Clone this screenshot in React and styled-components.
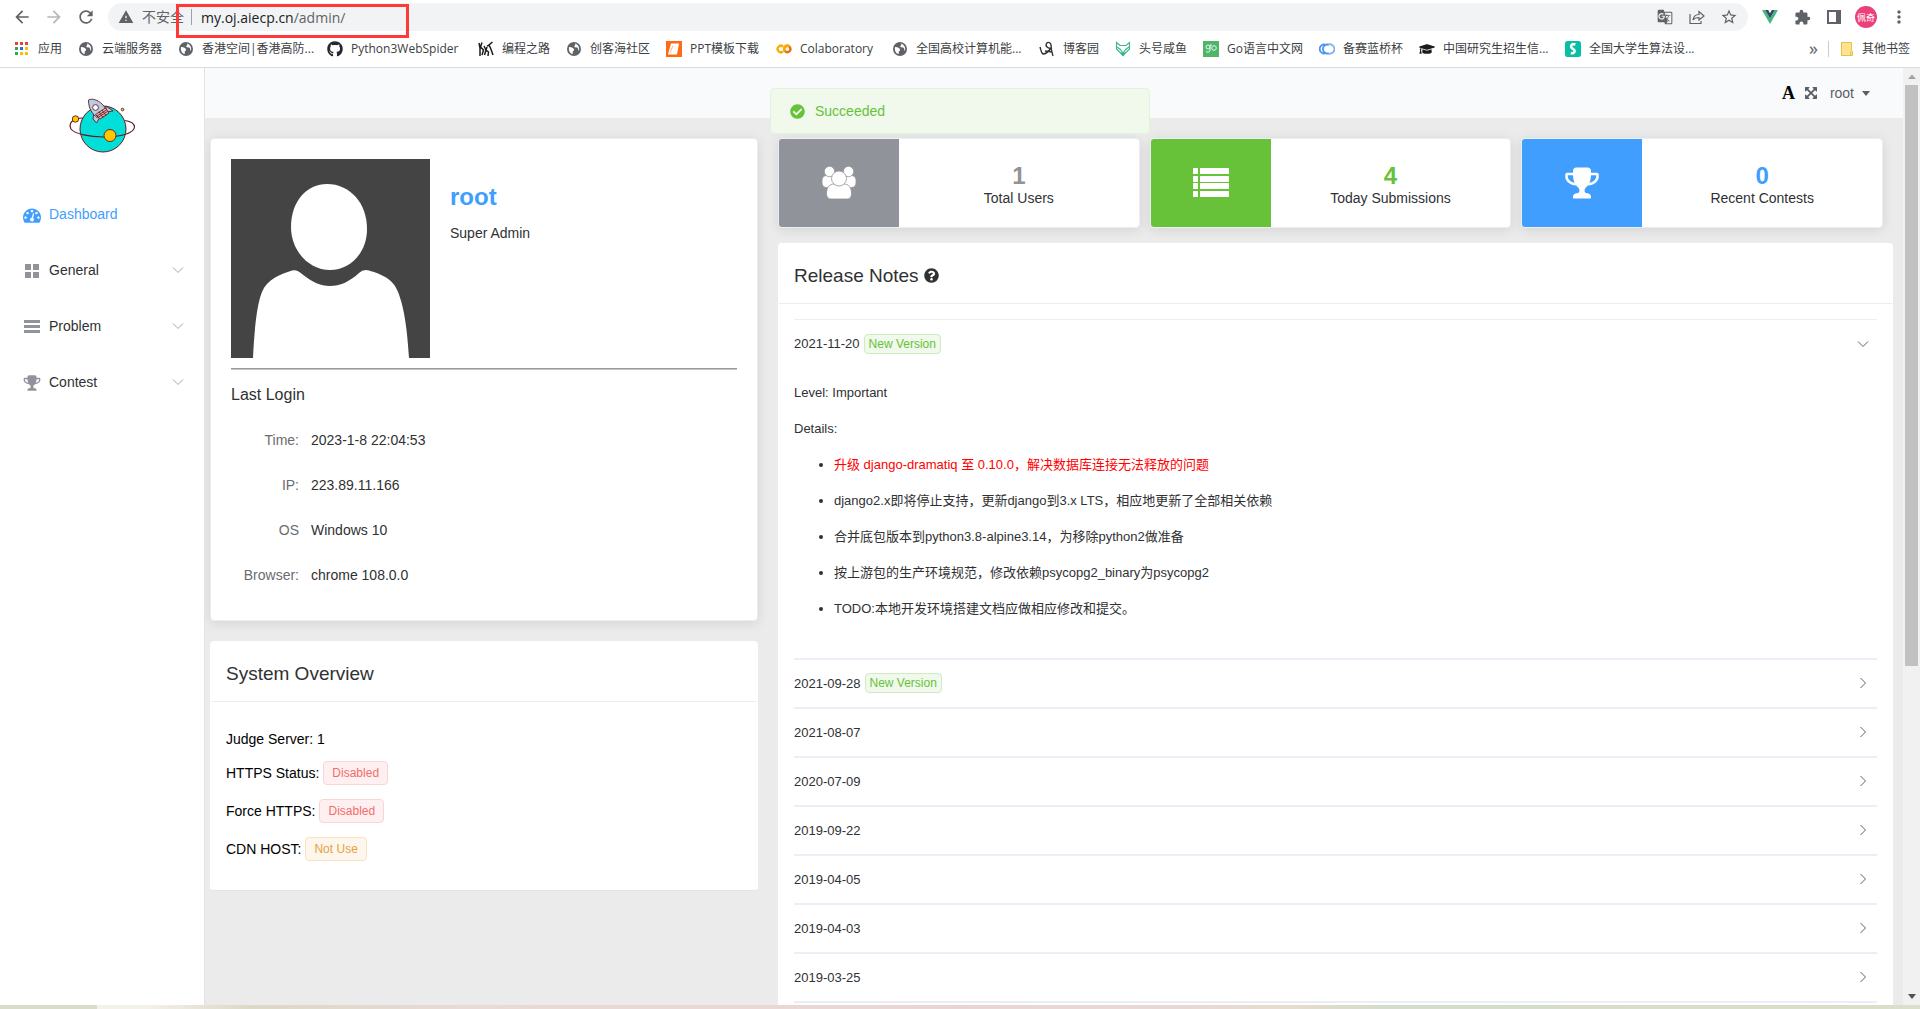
import React from "react";
import styled, { createGlobalStyle } from "styled-components";
import { FaGithub, FaCheckCircle, FaQuestionCircle, FaGraduationCap } from "react-icons/fa";
import { MdArrowBack, MdArrowForward, MdRefresh, MdWarning, MdExtension, MdMoreVert, MdStarBorder, MdGTranslate } from "react-icons/md";

const ui = `"Liberation Sans", Arial, "Noto Sans CJK SC", sans-serif`;
const chrome = `"Open Sans", "Noto Sans CJK SC", sans-serif`;

const GlobalStyle = createGlobalStyle`
  * { box-sizing: border-box; }
  html, body { margin: 0; padding: 0; }
  body { font-family: ${ui}; font-size: 14px; color: #303133; overflow: hidden; }
  button { font: inherit; color: inherit; border: 0; background: none; padding: 0; cursor: pointer; }
  a { color: inherit; text-decoration: none; }
  h1, h2, h3, p, ul, dl, dd { margin: 0; padding: 0; font-weight: normal; }
  svg { display: block; flex: none; }
`;

/* ---------- browser frame ---------- */

const Screen = styled.div`
  display: flex;
  flex-direction: column;
  height: 100vh;
  background: #fff;
`;

const Toolbar = styled.div`
  position: relative;
  display: flex;
  align-items: center;
  gap: 14px;
  height: 34px;
  padding: 0 13px 0 12px;
  color: #5f6368;
  font-family: ${chrome};
`;

const ToolButton = styled.button`
  display: grid;
  place-items: center;
  width: 18px;
  height: 28px;
  opacity: ${(p) => (p.$dim ? 0.45 : 1)};
`;

const Omnibox = styled.div`
  flex: 1;
  display: flex;
  align-items: center;
  height: 28px;
  padding: 0 10px;
  margin-right: -1px;
  border-radius: 14px;
  background: #f1f3f4;
  font-size: 14px;
`;

const Insecure = styled.button`
  display: flex;
  align-items: center;
  gap: 8px;
  padding-right: 7px;
  line-height: 16px;
  border-right: 1px solid #9aa0a6;
`;

const Address = styled.div`
  flex: 1;
  padding-left: 9px;
  white-space: nowrap;
  b { font-weight: 400; color: #202124; }
`;

const OmniActions = styled.div`
  display: flex;
  gap: 14px;
`;

const ToolActions = styled.div`
  display: flex;
  align-items: center;
  gap: 14px;
`;

const Profile = styled.button`
  display: grid;
  place-items: center;
  width: 22px;
  height: 22px;
  margin: 0 -2px;
  border-radius: 50%;
  background: #ec407a;
  color: #fff;
  font-size: 9px;
  white-space: nowrap;
`;

const Highlight = styled.div`
  position: absolute;
  left: 176px;
  top: 4px;
  width: 233px;
  height: 34px;
  border: 3px solid #ff3838;
  z-index: 2;
  pointer-events: none;
`;

const Bookmarks = styled.nav`
  display: flex;
  align-items: center;
  gap: 16px;
  height: 34px;
  padding: 0 10px 3px 14px;
  border-bottom: 1px solid #dadce0;
  font-family: ${chrome};
  font-size: 12px;
  line-height: 18px;
  color: #3c4043;
  white-space: nowrap;
`;

const Bookmark = styled.a`
  display: flex;
  align-items: center;
  gap: 8px;
`;

const BookmarkLabel = styled.span`
  width: ${(p) => p.$width}px;
`;

const Overflow = styled.button`
  margin-left: auto;
  margin-right: -6px;
  padding-bottom: 3px;
  font-size: 18px;
  line-height: 16px;
  color: #5f6368;
`;

const OtherBookmarks = styled(Bookmark)`
  padding-left: 11px;
  border-left: 1px solid #c8cbd0;
  line-height: 16px;
`;

const Taskbar = styled.div`
  flex: none;
  height: 4px;
  background: linear-gradient(90deg, #d9dcc6 0 97px, #f4f0ea 97px 147px, #dcd9c4 13%, #e8dad6 24%, #e9d6d4 50%, #e8d8d5 62%, #e6dccd 67%, #d5dccb 72%, #dadfc8 100%);
`;

/* ---------- page ---------- */

const Page = styled.div`
  flex: 1;
  min-height: 0;
  display: flex;
  overflow: hidden;
`;

const Sidebar = styled.aside`
  flex: none;
  width: 205px;
  background: #fff;
  border-right: 1px solid #e2e2e2;
`;

const Brand = styled.a`
  display: flex;
  justify-content: center;
  height: 118px;
  padding: 28px 0 0 2px;
`;

const MenuItem = styled.button`
  display: flex;
  align-items: center;
  gap: 5px;
  width: 100%;
  height: 56px;
  padding: 0 20px;
  text-align: left;
  color: ${(p) => (p.$active ? "#409eff" : "#303133")};
`;

const MenuIcon = styled.span`
  display: grid;
  place-items: center;
  width: 24px;
  padding-top: 2px;
  color: ${(p) => (p.$active ? "#409eff" : "#909399")};
`;

const MenuLabel = styled.span`
  flex: 1;
`;

const Main = styled.main`
  flex: 1;
  min-width: 0;
  background: #ebebeb;
  overflow: hidden;
`;

const TopBar = styled.header`
  display: flex;
  align-items: center;
  justify-content: flex-end;
  height: 50px;
  padding-right: 33px;
  background: #f9fafc;
`;

const FontGlyph = styled.button`
  font: bold 18px/20px "Liberation Serif", serif;
  color: #000;
  margin-right: 9px;
`;

const IconButton = styled.button`
  color: #5a5e66;
`;

const UserMenu = styled.button`
  display: flex;
  align-items: center;
  gap: 8px;
  margin-left: 12px;
  color: #5a5e66;
`;

const Columns = styled.div`
  display: grid;
  grid-template-columns: minmax(0, 548fr) minmax(0, 1115fr);
  gap: 20px;
  align-items: start;
  padding: 20px 10px 20px 5px;
`;

const Stack = styled.div`
  display: flex;
  flex-direction: column;
  gap: ${(p) => p.$gap}px;
`;

const ShadowCard = styled.section`
  background: #fff;
  border: 1px solid #ebeef5;
  border-radius: 4px;
  box-shadow: 0 2px 12px 0 rgba(0, 0, 0, 0.1);
`;

const ProfileCard = styled(ShadowCard)`
  padding: 20px 20px 22px;
`;

const Identity = styled.div`
  display: flex;
  gap: 20px;
`;

const UserName = styled.h1`
  margin: 24px 0 14px;
  font-size: 24px;
  line-height: 28px;
  font-weight: bold;
  color: #409eff;
`;

const Text = styled.p`
  line-height: 16px;
`;

const Rule = styled.hr`
  height: 2px;
  margin: 10px 0 15px;
  border: 0;
  border-top: 1px solid #9a9a9a;
  border-bottom: 1px solid #c4c4c4;
`;

const LoginTitle = styled.h2`
  margin-bottom: 13px;
  font-size: 16px;
  line-height: 20px;
`;

const LoginList = styled.dl`
  display: grid;
  grid-template-columns: 68px 1fr;
  column-gap: 12px;
  line-height: 45px;
  dt { text-align: right; color: #6a6c70; }
`;

const Panel = styled.section`
  background: #fff;
  border: 1px solid #fff;
  border-bottom-color: #e2e2e2;
  border-radius: 4px;
`;

const PanelTitle = styled.h2`
  display: flex;
  align-items: center;
  gap: 5px;
  padding: 19px 15px 15px;
  border-bottom: 1px solid #ececec;
  font-size: 19px;
  line-height: 25px;
`;

const StatusList = styled.div`
  display: flex;
  flex-direction: column;
  gap: 14px;
  padding: 29px 15px;
  color: #000;
`;

const StatusRow = styled.div`
  display: flex;
  align-items: center;
  gap: 4px;
  line-height: 16px;
`;

const tones = {
  success: ["#67c23a", "#f0f9eb", "#cfebc0"],
  danger: ["#f56c6c", "#fef0f0", "#fbd5d5"],
  warning: ["#e6a23c", "#fdf6ec", "#f8e3c5"],
};

const Tag = styled.span`
  display: inline-block;
  padding: 0 ${(p) => (p.$mini ? 4 : 8)}px;
  line-height: ${(p) => (p.$mini ? 18 : 22)}px;
  font-size: 12px;
  border: 1px solid ${(p) => tones[p.$tone][2]};
  border-radius: 4px;
  color: ${(p) => tones[p.$tone][0]};
  background: ${(p) => tones[p.$tone][1]};
`;

const Stats = styled.div`
  display: grid;
  grid-template-columns: repeat(3, 1fr);
  gap: 10px;
  padding-right: 10px;
`;

const StatCard = styled(ShadowCard)`
  display: flex;
  height: 90px;
  overflow: hidden;
`;

const StatIcon = styled.div`
  display: grid;
  place-items: center;
  width: 120px;
  color: #fff;
  background: ${(p) => p.$color};
`;

const StatBody = styled.div`
  flex: 1;
  display: flex;
  flex-direction: column;
  align-items: center;
  justify-content: center;
  padding-top: 2px;
  strong { font-size: 24px; line-height: 28px; color: ${(p) => p.$color}; }
  span { line-height: 16px; }
`;

const Notes = styled.div`
  margin: 15px 15px 40px;
  border-top: 1px solid #ebeef5;
  font-size: 13px;
`;

const Note = styled.article`
  border-bottom: 2px solid #ebeef5;
`;

const NoteHead = styled.button`
  display: flex;
  align-items: center;
  gap: 4px;
  width: 100%;
  height: ${(p) => (p.$open ? 48 : 47)}px;
  padding: 0 8px 1px 0;
  svg { margin-left: auto; }
`;

const NoteBody = styled.div`
  padding: 15px 0 39px;
  line-height: 20px;
  p { margin-bottom: 16px; }
  ul { display: flex; flex-direction: column; gap: 16px; padding-left: 40px; }
`;

const NoteLine = styled.li`
  &::marker { color: #303133; }
  span { color: ${(p) => (p.$urgent ? "#f00" : "inherit")}; }
`;

const ScrollBar = styled.div`
  flex: none;
  display: flex;
  flex-direction: column;
  width: 17px;
  padding: 0 2px;
  background: #f1f1f1;
`;

const ScrollArrow = styled.button`
  display: grid;
  place-items: center;
  height: 17px;
  color: ${(p) => p.$color};
`;

const Thumb = styled.div`
  flex: 581;
  background: #c1c1c1;
`;

const Track = styled.div`
  flex: 322;
`;

const Message = styled.div`
  position: fixed;
  top: 88px;
  left: 50%;
  transform: translateX(-50%);
  display: flex;
  align-items: center;
  gap: 10px;
  width: 380px;
  height: 46px;
  padding-left: 19px;
  border: 1px solid #e1f3d8;
  border-radius: 4px;
  background: #f0f9eb;
  color: #67c23a;
  z-index: 5;
`;

/* ---------- drawings ---------- */

const Chevron = ({ right, color = "#606266", w = 12 }) => (
  <svg width={w} height="12" viewBox="0 0 12 12" fill="none" stroke={color}>
    <path d={right ? "M3.5 1L8.5 6L3.5 11" : "M1 3.5L6 8.5L11 3.5"} />
  </svg>
);

const Globe = () => (
  <svg width="16" height="16" viewBox="0 0 16 16">
    <circle cx="8" cy="8" r="7" fill="#5f6368" />
    <path d="M3 6.2C4.6 5.8 6.6 6.6 7.6 7.8C8.6 9 8 10 7 10.2C6.4 11.4 7.2 12.6 6.4 13C4 12.4 2.4 9.6 3 6.2ZM9.2 2.6C9.8 4.2 8.2 4.6 8.2 5.8C9.4 6.8 10.8 6 12 7.2C12.6 8.2 11.8 9.8 13 9.6C13.8 7 12.4 3.6 9.2 2.6Z" fill="#fff" />
  </svg>
);

const Apps = () => {
  const c = ["#ea4335", "#ea4335", "#ea4335", "#34a853", "#1a73e8", "#fbbc04", "#34a853", "#fbbc04", "#fbbc04"];
  return (
    <svg width="16" height="16" viewBox="0 0 16 16">
      {c.map((f, i) => <rect key={i} x={1 + (i % 3) * 5} y={1 + Math.floor(i / 3) * 5} width="3" height="3" fill={f} />)}
    </svg>
  );
};

const Dancers = () => (
  <svg width="16" height="16" viewBox="0 0 16 16" fill="none" stroke="#1c1c1c" strokeWidth="1.5">
    <path d="M1 2L2 7V15M4 1.5L2.5 6L5.500 9L4 14M6 5L8 9L6.500 14M9 6L8 9L10.500 11L10 15M14.500 1L11 4L12.500 7L15 14M12 4L9 5" />
  </svg>
);

const Slide = () => (
  <svg width="16" height="16" viewBox="0 0 16 16">
    <rect width="16" height="16" fill="#ff6a13" />
    <path d="M5 2.5H13L11 13.5H2Z" fill="#fff" />
    <path d="M7 4.5L4 12" stroke="#ffb78c" />
  </svg>
);

const Colab = () => (
  <svg width="16" height="16" viewBox="0 0 16 16" fill="none" strokeWidth="2.4">
    <path d="M7 5.6A3.2 3.2 0 1 0 7 10.4" stroke="#f9ab00" />
    <circle cx="11.3" cy="8" r="3.2" stroke="#e8710a" />
    <path d="M9 10.3A3.2 3.2 0 0 1 13.6 5.7" stroke="#f9ab00" />
  </svg>
);

const Blog = () => (
  <svg width="16" height="16" viewBox="0 0 16 16" fill="none" stroke="#333" strokeWidth="1.4">
    <path d="M1 6C2 9 2 12 4 13C7 13 10 10 12 7M12 7C9 8 6 5 7.5 2.5C9 .5 12 1.5 12 4C12 8 13 12 14 15M6 10L13 11" />
  </svg>
);

const Fox = () => (
  <svg width="16" height="16" viewBox="0 0 16 16" fill="none" stroke="#3fb98a" strokeWidth="1.2">
    <path d="M1.5 1.5L5 4.5H11L14.5 1.5V8L8 14.5L1.5 8ZM2 6L6 9M14 6L10 9M5 8L8 12L11 8" />
    <path d="M6 12L8 14.5L10 12Z" fill="#2aa876" />
  </svg>
);

const GoMark = () => (
  <svg width="16" height="16" viewBox="0 0 16 16" fill="none" stroke="#e4f7e9">
    <rect width="16" height="16" fill="#4fb568" stroke="none" />
    <circle cx="5" cy="6" r="2" />
    <path d="M7 4V10Q5 12.5 3 10.5M7 4H9" />
    <circle cx="11" cy="7" r="2.3" />
  </svg>
);

const BlueRings = () => (
  <svg width="16" height="16" viewBox="0 0 16 16" fill="none" stroke="#4b93f0" strokeWidth="1.8">
    <path d="M7 4.200A4 4.500 0 1 0 7 11.800M10 3.800A4.500 4.500 0 1 0 10 12.200" />
    <path d="M9 3.400A5 4.800 0 1 1 9 12.600" stroke="#7db2f5" />
  </svg>
);

const SMark = () => (
  <svg width="16" height="16" viewBox="0 0 16 16">
    <rect width="16" height="16" rx="2.5" fill="#08bfa4" />
    <path d="M10.4 3.4C7.5 2.4 5.6 4 6.2 6.2C6.8 8 9.6 8 9.6 10C9.6 11.6 8 12.6 5.8 12.2" fill="none" stroke="#fff" strokeWidth="2.6" />
  </svg>
);

const Folder = () => (
  <svg width="14" height="16" viewBox="0 0 14 16">
    <path d="M1.5 1.5H11.5V10.5H12.5V14.5H1.5Z" fill="#ffe38f" stroke="#e5c04b" />
    <path d="M10.5 14V11" stroke="#e5c04b" />
  </svg>
);

const Share = () => (
  <svg width="18" height="18" viewBox="0 0 18 18" fill="none" stroke="#5f6368" strokeWidth="1.2">
    <path d="M2 6V15.5H13V13M5 12C5.5 8.5 8 6.5 11 6.5V3.5L16 8L11 12V9.5C8.5 9.5 6.5 10 5 12Z" />
  </svg>
);

const Vue = () => (
  <svg width="16" height="14" viewBox="0 0 16 14">
    <path d="M0 0H3.2L8 8.4L12.8 0H16L8 14Z" fill="#41b883" />
    <path d="M3.2 0H6.2L8 3.2L9.8 0H12.8L8 8.4Z" fill="#35495e" />
  </svg>
);

const SidePanel = () => (
  <svg width="14" height="14" viewBox="0 0 14 14">
    <path d="M0 0H14V14H0ZM2 2V12H9V2Z" fill="#5f6368" fillRule="evenodd" />
  </svg>
);

const Logo = () => (
  <svg width="70" height="60" viewBox="68 96 70 60" stroke="#641a20" strokeLinejoin="round">
    <circle cx="103" cy="129" r="23" fill="#00e0d8" />
    <path d="M83 118C73 118 68 123 71 129C75 134 90 137 103 137C122 137 134 133 134.5 127C134.5 124 131 121.5 125 120.5" fill="none" strokeWidth="1.2" />
    <g strokeWidth=".9">
      <path d="M94 113L93 119L96.5 123L100 117Z" fill="#b9cde2" />
      <path d="M106 106L113 111L106 112Z" fill="#b9cde2" />
      <path d="M88.5 100C92 98 98 100 102 104C105 107 106 109 106.500 111.500L97 117.500C92.500 114 88.500 109 88.500 100Z" fill="#b9cde2" />
      <path d="M95.500 114.500L105.500 108L109 113L100 119Z" fill="#e9b4b0" />
      <path d="M97 116L106.500 110M98 117.500L107.500 111.500M99 111.500L103 117.500M102 110L106 115.500" fill="none" />
      <circle cx="95.500" cy="107.500" r="2.900" fill="#fff" />
      <circle cx="110" cy="135.500" r="6" fill="#ffc800" />
      <circle cx="75.500" cy="119" r="3.200" fill="#ffc800" />
      <circle cx="122.500" cy="109.500" r="1.300" fill="#ffc800" />
    </g>
  </svg>
);

const Glyph = ({ d, size }) => (
  <svg width={size} height={size} viewBox="0 0 1792 1792" fill="currentColor"><path d={d} /></svg>
);

const GAUGE = "M384 1152q0-53-37.5-90.5t-90.5-37.5-90.5 37.5-37.5 90.5 37.5 90.5 90.5 37.5 90.5-37.5 37.5-90.5zm192-448q0-53-37.5-90.5t-90.5-37.5-90.5 37.5-37.5 90.5 37.5 90.5 90.5 37.5 90.5-37.5 37.5-90.5zm428 481l101-382q6-26-7.5-48.5t-38.5-29.5-48 6.500-30 39.500l-101 382q-60 5-107 43.500t-63 98.500q-20 77 20 146t117 89 146-20 89-117q16-60-6-117t-72-91zm660-33q0-53-37.500-90.500t-90.500-37.500-90.500 37.500-37.500 90.500 37.500 90.500 90.500 37.500 90.500-37.500 37.500-90.500zm-640-640q0-53-37.500-90.500t-90.500-37.500-90.500 37.500-37.500 90.500 37.500 90.500 90.500 37.500 90.500-37.500 37.500-90.500zm448 192q0-53-37.500-90.500t-90.500-37.500-90.500 37.500-37.500 90.500 37.500 90.500 90.500 37.500 90.500-37.500 37.500-90.500zm320 448q0 261-141 483-19 29-54 29h-1402q-35 0-54-29-141-221-141-483 0-182 71-348t191-286 286-191 348-71 348 71 286 191 191 286 71 348z";
const TROPHY = "M522 883q-74-162-74-371h-256v96q0 78 94.500 162t235.500 113zm1078-275v-96h-256q0 209-74 371 141-29 235.500-113t94.500-162zm128-128v128q0 71-41.500 143t-112 130-173 97.500-215.500 44.500q-42 54-95 95-38 34-52.500 72.500t-14.500 89.500q0 54 30.500 91t97.500 37q75 0 133.500 45.500t58.500 114.500v64q0 14-9 23t-23 9h-832q-14 0-23-9t-9-23v-64q0-69 58.500-114.500t133.500-45.500q67 0 97.500-37t30.500-91q0-51-14.500-89.500t-52.500-72.500q-53-41-95-95-113-5-215.500-44.500t-173-97.500-112-130-41.500-143v-128q0-40 28-68t68-28h288v-96q0-66 47-113t113-47h576q66 0 113 47t47 113v96h288q40 0 68 28t28 68z";
const EXPAND = "M1411 541l-355 355 355 355 144-144q29-31 70-14 39 17 39 59v448q0 26-19 45t-45 19h-448q-42 0-59-40-17-39 14-69l144-144-355-355-355 355 144 144q31 30 14 69-17 40-59 40h-448q-26 0-45-19t-19-45v-448q0-42 40-59 39-17 69 14l144 144 355-355-355-355-144 144q-19 19-45 19-12 0-24-5-40-17-40-59v-448q0-26 19-45t45-19h448q42 0 59 40 17 39-14 69l-144 144 355 355 355-355-144-144q-31-30-14-69 17-40 59-40h448q26 0 45 19t19 45v448q0 42-39 59-13 5-25 5-26 0-45-19z";

const GridIcon = () => (
  <svg width="14" height="14" viewBox="0 0 14 14" fill="currentColor">
    <path d="M0 0H6V6H0ZM8 0H14V6H8ZM0 8H6V14H0ZM8 8H14V14H8Z" />
  </svg>
);

const BarsIcon = () => (
  <svg width="16" height="14" viewBox="0 0 16 14" fill="currentColor">
    <path d="M0 0H16V3H0ZM0 5H16V8H0ZM0 10H16V13H0Z" />
  </svg>
);

const UsersIcon = () => (
  <svg width="34" height="34" viewBox="0 0 34 34" fill="#fff" stroke="#909399" strokeWidth=".8">
    <rect x="0" y="9.500" width="14" height="12" rx="4.500" />
    <rect x="20" y="9.500" width="14" height="12" rx="4.500" />
    <circle cx="7.500" cy="5.500" r="5.200" />
    <circle cx="26.500" cy="5.500" r="5.200" />
    <path d="M4.500 27C4.500 21 8 18 12 18H22C26 18 29.500 21 29.500 27C29.500 31 28 33 25 33H9C6 33 4.500 31 4.500 27Z" />
    <circle cx="17" cy="12.500" r="7.500" />
  </svg>
);

const ListIcon = () => (
  <svg width="36" height="30" viewBox="0 0 36 30" fill="#fff">
    {[0, 8, 15, 23].map((y) => (
      <React.Fragment key={y}>
        <rect x="0" y={y} width="5" height="6" rx=".6" />
        <rect x="7" y={y} width="29" height="6" rx=".6" />
      </React.Fragment>
    ))}
  </svg>
);

const Avatar = () => (
  <svg width="199" height="199" viewBox="0 0 199 199" role="img" aria-label="avatar">
    <rect width="199" height="199" fill="#444" />
    <path d="M60 68C60 42 76 25 96 25C119 25 136 44 136 70C136 94 119 111 99 111C78 111 60 92 60 68Z" fill="#fff" />
    <path d="M22 199C24 160 27 143 31 133C36 120 50 115 61 111.500Q66 110 71 115C81 123 89 127 99 127C109 127 118 123 128 114Q132 110 138 111.500C149 115 162 119 167 133C172 145 176 165 178 199Z" fill="#fff" />
  </svg>
);

const Triangle = ({ up, w = 8 }) => (
  <svg width={w} height="5" viewBox="0 0 8 5" fill="currentColor"><path d={up ? "M0 5L4 .5L8 5Z" : "M0 0H8L4 5Z"} /></svg>
);

/* ---------- data ---------- */

const bookmarks = [
  [<Apps />, "应用", 24],
  [<Globe />, "云端服务器", 60],
  [<Globe />, "香港空间|香港高防...", 109],
  [<FaGithub size={16} color="#24292e" />, "Python3WebSpider", 111],
  [<Dancers />, "编程之路", 48],
  [<Globe />, "创客海社区", 60],
  [<Slide />, "PPT模板下载", 70],
  [<Colab />, "Colaboratory", 76],
  [<Globe />, "全国高校计算机能...", 107],
  [<Blog />, "博客园", 36],
  [<Fox />, "头号咸鱼", 48],
  [<GoMark />, "Go语言中文网", 76],
  [<BlueRings />, "备赛蓝桥杯", 60],
  [<FaGraduationCap size={16} color="#1c1c1c" />, "中国研究生招生信...", 106],
  [<SMark />, "全国大学生算法设...", 106],
];

const menu = [
  ["Dashboard", <Glyph d={GAUGE} size={18} />],
  ["General", <GridIcon />],
  ["Problem", <BarsIcon />],
  ["Contest", <Glyph d={TROPHY} size={18} />],
];

const login = [
  ["Time:", "2023-1-8 22:04:53"],
  ["IP:", "223.89.11.166"],
  ["OS", "Windows 10"],
  ["Browser:", "chrome 108.0.0"],
];

const statuses = [
  ["HTTPS Status:", "Disabled", "danger"],
  ["Force HTTPS:", "Disabled", "danger"],
  ["CDN HOST:", "Not Use", "warning"],
];

const stats = [
  ["1", "Total Users", "#909399", <UsersIcon />],
  ["4", "Today Submissions", "#67c23a", <ListIcon />],
  ["0", "Recent Contests", "#409eff", <Glyph d={TROPHY} size={36} />],
];

const details = [
  "升级 django-dramatiq 至 0.10.0，解决数据库连接无法释放的问题",
  "django2.x即将停止支持，更新django到3.x LTS，相应地更新了全部相关依赖",
  "合并底包版本到python3.8-alpine3.14，为移除python2做准备",
  "按上游包的生产环境规范，修改依赖psycopg2_binary为psycopg2",
  "TODO:本地开发环境搭建文档应做相应修改和提交。",
];

const older = ["2021-09-28", "2021-08-07", "2020-07-09", "2019-09-22", "2019-04-05", "2019-04-03", "2019-03-25"];

/* ---------- app ---------- */

export default function App() {
  return (
    <Screen>
      <GlobalStyle />
      <Toolbar>
        <ToolButton aria-label="Back"><MdArrowBack size={20} /></ToolButton>
        <ToolButton aria-label="Forward" $dim><MdArrowForward size={20} /></ToolButton>
        <ToolButton aria-label="Reload"><MdRefresh size={20} /></ToolButton>
        <Omnibox>
          <Insecure><MdWarning size={16} />不安全</Insecure>
          <Address role="textbox" aria-label="Address"><b>my.oj.aiecp.cn</b>/admin/</Address>
          <OmniActions>
            <ToolButton aria-label="Translate"><MdGTranslate size={16} /></ToolButton>
            <ToolButton aria-label="Share"><Share /></ToolButton>
            <ToolButton aria-label="Bookmark"><MdStarBorder size={18} /></ToolButton>
          </OmniActions>
        </Omnibox>
        <ToolActions>
          <ToolButton aria-label="Vue"><Vue /></ToolButton>
          <ToolButton aria-label="Extensions"><MdExtension size={17} /></ToolButton>
          <ToolButton aria-label="Side panel"><SidePanel /></ToolButton>
          <Profile>佩奇</Profile>
          <ToolButton aria-label="Menu"><MdMoreVert size={20} /></ToolButton>
        </ToolActions>
        <Highlight />
      </Toolbar>
      <Bookmarks>
        {bookmarks.map(([icon, label, width]) => (
          <Bookmark href="#" key={label}>{icon}<BookmarkLabel $width={width}>{label}</BookmarkLabel></Bookmark>
        ))}
        <Overflow>»</Overflow>
        <OtherBookmarks href="#"><Folder />其他书签</OtherBookmarks>
      </Bookmarks>

      <Page>
        <Sidebar>
          <Brand href="#" aria-label="Home"><Logo /></Brand>
          <nav>
            {menu.map(([label, icon], i) => (
              <MenuItem key={label} $active={i === 0}>
                <MenuIcon $active={i === 0}>{icon}</MenuIcon>
                <MenuLabel>{label}</MenuLabel>
                {i > 0 && <Chevron color="#a3a6ad" />}
              </MenuItem>
            ))}
          </nav>
        </Sidebar>

        <Main>
          <TopBar>
            <FontGlyph aria-label="Font">A</FontGlyph>
            <IconButton aria-label="Full screen"><Glyph d={EXPAND} size={14} /></IconButton>
            <UserMenu>root<Triangle /></UserMenu>
          </TopBar>
          <Columns>
            <Stack $gap={20}>
              <ProfileCard>
                <Identity>
                  <Avatar />
                  <div>
                    <UserName>root</UserName>
                    <Text>Super Admin</Text>
                  </div>
                </Identity>
                <Rule />
                <LoginTitle>Last Login</LoginTitle>
                <LoginList>
                  {login.map(([k, v]) => (
                    <React.Fragment key={k}><dt>{k}</dt><dd>{v}</dd></React.Fragment>
                  ))}
                </LoginList>
              </ProfileCard>
              <Panel>
                <PanelTitle>System Overview</PanelTitle>
                <StatusList>
                  <Text>Judge Server: 1</Text>
                  {statuses.map(([k, v, tone]) => (
                    <StatusRow key={k}>{k}<Tag $tone={tone}>{v}</Tag></StatusRow>
                  ))}
                </StatusList>
              </Panel>
            </Stack>

            <Stack $gap={15}>
              <Stats>
                {stats.map(([n, label, color, icon]) => (
                  <StatCard key={label}>
                    <StatIcon $color={color}>{icon}</StatIcon>
                    <StatBody $color={color}><strong>{n}</strong><span>{label}</span></StatBody>
                  </StatCard>
                ))}
              </Stats>
              <Panel>
                <PanelTitle>Release Notes <FaQuestionCircle size={15} /></PanelTitle>
                <Notes>
                  <Note>
                    <NoteHead $open>2021-11-20<Tag $mini $tone="success">New Version</Tag><Chevron /></NoteHead>
                    <NoteBody>
                      <p>Level: Important</p>
                      <p>Details:</p>
                      <ul>
                        {details.map((d, i) => (
                          <NoteLine key={d} $urgent={i === 0}><span>{d}</span></NoteLine>
                        ))}
                      </ul>
                    </NoteBody>
                  </Note>
                  {older.map((date, i) => (
                    <Note key={date}>
                      <NoteHead>{date}{i === 0 && <Tag $mini $tone="success">New Version</Tag>}<Chevron right /></NoteHead>
                    </Note>
                  ))}
                </Notes>
              </Panel>
            </Stack>
          </Columns>
        </Main>

        <ScrollBar>
          <ScrollArrow aria-label="Scroll up" $color="#a3a3a3"><Triangle up /></ScrollArrow>
          <Thumb />
          <Track />
          <ScrollArrow aria-label="Scroll down" $color="#505050"><Triangle /></ScrollArrow>
        </ScrollBar>
      </Page>
      <Taskbar />
      <Message role="alert"><FaCheckCircle size={15} />Succeeded</Message>
    </Screen>
  );
}
